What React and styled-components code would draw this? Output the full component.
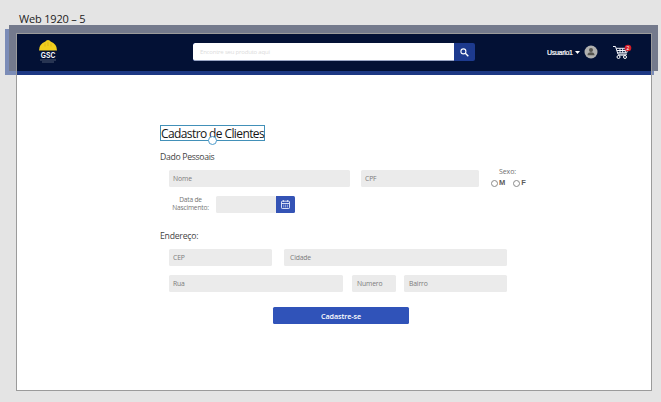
import React from "react";
import styled, { createGlobalStyle } from "styled-components";

const Global = createGlobalStyle`
  *, *::before, *::after { box-sizing: border-box; }
  body { margin: 0; background: #e4e4e4; }
`;

const Canvas = styled.main`
  position: relative;
  width: 661px;
  height: 402px;
  overflow: hidden;
  background: #e4e4e4;
  font-family: "Open Sans", "Noto Sans", sans-serif;
`;

const BoardLabel = styled.div`
  height: 33px;
  padding: 11px 0 0 19px;
  font-size: 11px;
  line-height: 15px;
  letter-spacing: -0.18px;
  color: #1c1c1c;
`;

const BackBand = styled.div`
  position: absolute;
  left: 5px;
  top: 29px;
  width: 649px;
  height: 46px;
  background: #7b8cb7;
`;

const FrontBand = styled.div`
  position: absolute;
  left: 9px;
  top: 25px;
  width: 649px;
  height: 46px;
  background: #747a8c;
`;

const Artboard = styled.section`
  position: relative;
  width: 636px;
  height: 358px;
  margin-left: 16px;
  border: 1px solid #9b9b9b;
  background: #fff;
`;

const Header = styled.header`
  display: flex;
  align-items: flex-start;
  height: 41px;
  background: #031135;
  border-bottom: 4px solid #1d3884;
`;

const Logo = styled.svg`
  width: 20px;
  height: 25px;
  margin: 5px 0 0 21px;
  overflow: visible;
`;

const Search = styled.div`
  display: flex;
  width: 282px;
  height: 18px;
  margin: 9px 0 0 135px;
  border-radius: 2px;
  overflow: hidden;
  background: #1d3a8e;
`;

const SearchField = styled.div`
  width: 261px;
  padding-left: 7px;
  background: #fff;
  border: solid #9aa6c6;
  border-width: 0 0 1px;
  border-radius: 2px 0 0 2px;
  font-size: 6px;
  line-height: 18px;
  letter-spacing: -0.2px;
  color: #dcdcdc;
`;

const SearchButton = styled.div`
  display: grid;
  place-items: center;
  width: 21px;
`;

const User = styled.div`
  display: flex;
  align-items: center;
  height: 14px;
  margin: 11px 0 0 72px;
  font: 7px/14px "Liberation Sans", sans-serif;
  color: #fff;
`;

const UserName = styled.span`
  width: 28px;
  padding-top: 1px;
  letter-spacing: -0.3px;
  -webkit-text-stroke: 0.2px #fff;
`;

const Avatar = styled.svg`
  width: 14px;
  height: 14px;
  margin-left: 4px;
`;

const Cart = styled.svg`
  width: 20px;
  height: 18px;
  margin: 8px 0 0 14px;
`;

const Form = styled.div`
  padding: 50px 0 0 143px;
`;

const Title = styled.h1`
  position: relative;
  width: 105px;
  height: 16px;
  margin: 0;
  border: 1px solid #4290b8;
  font-size: 12px;
  font-weight: 400;
  line-height: 16px;
  letter-spacing: -0.6px;
  white-space: nowrap;
  color: #161616;
`;

const Handle = styled.i`
  position: absolute;
  left: 47px;
  top: 10px;
  width: 9px;
  height: 9px;
  border: 1px solid #4d9bcb;
  border-radius: 50%;
  background: #fff;
`;

const SectionTitle = styled.h2`
  height: 12px;
  margin: ${(p) => p.$top}px 0 0;
  font-size: 8.7px;
  font-weight: 400;
  line-height: 12px;
  letter-spacing: ${(p) => p.$spacing || -0.33}px;
  color: #444;
`;

const Row = styled.div`
  display: flex;
  height: 17px;
  margin: ${(p) => p.$top}px 0 0 9px;
`;

const Field = styled.div`
  flex: none;
  width: ${(p) => p.$width}px;
  height: 17px;
  margin-left: ${(p) => p.$gap || 0}px;
  padding-left: ${(p) => p.$pad || 4}px;
  border-radius: 1.5px;
  background: #ebebeb;
  font-size: 6.8px;
  line-height: 18px;
  letter-spacing: ${(p) => p.$spacing || -0.15}px;
  color: #7c7c7c;
`;

const Gender = styled.div`
  width: 38px;
  height: 22px;
  margin: -3px 0 0 12px;
  font-size: 7px;
  line-height: 10px;
  color: #707070;
`;

const GenderLabel = styled.div`
  padding-left: 8px;
  letter-spacing: -0.1px;
`;

const Options = styled.div`
  display: flex;
  gap: 8px;
  margin-top: 2px;
`;

const Option = styled.div`
  display: flex;
  align-items: center;
  gap: 1px;
  font: 700 7.5px/8px "Liberation Sans", sans-serif;
  color: #5c5c5c;

  &::before {
    content: "";
    width: 7px;
    height: 7px;
    border: 1px solid #8a8a8a;
    border-radius: 50%;
  }
`;

const DateLabel = styled.div`
  width: 43px;
  font-size: 6.6px;
  line-height: 8px;
  text-align: center;
  letter-spacing: -0.18px;
  color: #747474;
`;

const DateButton = styled.div`
  display: grid;
  place-items: center;
  width: 19px;
  height: 17px;
  border-radius: 0 1.5px 1.5px 0;
  background: #3453b5;
`;

const Submit = styled.div`
  width: 136px;
  height: 17px;
  margin: 15px 0 0 113px;
  border-radius: 1.5px;
  background: #3053b9;
  font-size: 7.2px;
  font-weight: 600;
  line-height: 18px;
  text-align: center;
  letter-spacing: -0.08px;
  color: #fff;
`;

function SiteLogo() {
  return (
    <Logo viewBox="0 0 20 25">
      <text x="2.8" y="18.6" fill="#fff" fontSize="9" fontWeight="700" fontFamily="Liberation Sans, sans-serif" textLength="14.5" lengthAdjust="spacingAndGlyphs">GSC</text>
      <path d="M1 11.4Q1 5 7.4 2.6Q8 1 10 1t2.6 1.6Q19 5 19 11.4Z" fill="#f2cf1d" />
      <path d="M7 4.5v3M10 3v4M13 4.5v3" stroke="#d8ae17" strokeWidth=".7" />
      <path d="M2 21h16M4 23h12" stroke="#4d5871" strokeWidth="1" />
    </Logo>
  );
}

export default function App() {
  return (
    <Canvas>
      <Global />
      <BackBand />
      <FrontBand />
      <BoardLabel>Web 1920 – 5</BoardLabel>
      <Artboard>
        <Header>
          <SiteLogo />
          <Search>
            <SearchField>Encontre seu produto aqui</SearchField>
            <SearchButton>
              <svg width="9" height="9" viewBox="0 0 9 9" fill="none" stroke="#fff">
                <circle cx="3.4" cy="3.4" r="2.5" strokeWidth="1.1" />
                <path d="M5.3 5.3 8.3 8.3" strokeWidth="1.4" />
              </svg>
            </SearchButton>
          </Search>
          <User>
            <UserName>Usuario1</UserName>
            <svg width="5" height="3" viewBox="0 0 5 3"><path d="M0 0h5L2.5 3Z" fill="#fff" /></svg>
            <Avatar viewBox="0 0 14 14">
              <circle cx="7" cy="7" r="6.5" fill="#b1b1af" />
              <circle cx="7" cy="5" r="2" fill="#55544e" />
              <path d="M3.6 10.2V9Q4 7.4 7 7.3 10 7.4 10.4 9v1.2Z" fill="#55544e" />
            </Avatar>
          </User>
          <Cart viewBox="0 0 20 18">
            <path d="M1 4.5h2.5L6 12.2h9M4.2 6.3h12l-1.5 4.5H5.6M5 8.5h10.3M8 6.3v4.5M10.7 6.3v4.5M13.3 6.3v4.5" fill="none" stroke="#f2f4fa" strokeWidth="1" />
            <circle cx="6.5" cy="15" r="1.5" fill="none" stroke="#fff" />
            <circle cx="13" cy="15" r="1.5" fill="none" stroke="#fff" />
            <path d="M6 13.4h8" stroke="#fff" strokeWidth=".7" />
            <circle cx="16" cy="6" r="3.3" fill="#d51d27" />
            <text x="16" y="7.9" textAnchor="middle" fill="#fff" fontSize="5" fontFamily="Liberation Sans, sans-serif">2</text>
          </Cart>
        </Header>
        <Form>
          <Title>Cadastro de Clientes<Handle /></Title>
          <SectionTitle $top={10}>Dado Pessoais</SectionTitle>
          <Row $top={7}>
            <Field $width={181} $spacing={-0.05}>Nome</Field>
            <Field $width={118} $gap={11}>CPF</Field>
            <Gender>
              <GenderLabel>Sexo:</GenderLabel>
              <Options><Option>M</Option><Option>F</Option></Options>
            </Gender>
          </Row>
          <Row $top={9}>
            <DateLabel>Data de Nascimento:</DateLabel>
            <Field $width={60} $gap={4} />
            <DateButton>
              <svg width="9" height="9" viewBox="0 0 9 9" fill="none" stroke="#e9edfa">
                <rect x=".5" y="1.2" width="8" height="7.3" rx=".7" strokeWidth=".9" />
                <path d="M.5 3.5h8M2.3 0v2M6.7 0v2" strokeWidth=".9" />
                <path d="M2.3 5.2h4.8M2.3 6.8h4.8" strokeDasharray="1 .8" strokeWidth=".8" />
              </svg>
            </DateButton>
          </Row>
          <SectionTitle $top={17} $spacing={-0.25}>Endereço:</SectionTitle>
          <Row $top={7}>
            <Field $width={103}>CEP</Field>
            <Field $width={223} $gap={12} $pad={6}>Cidade</Field>
          </Row>
          <Row $top={9}>
            <Field $width={174}>Rua</Field>
            <Field $width={44} $gap={9} $pad={5}>Numero</Field>
            <Field $width={103} $gap={8} $pad={5}>Bairro</Field>
          </Row>
          <Submit>Cadastre-se</Submit>
        </Form>
      </Artboard>
    </Canvas>
  );
}
